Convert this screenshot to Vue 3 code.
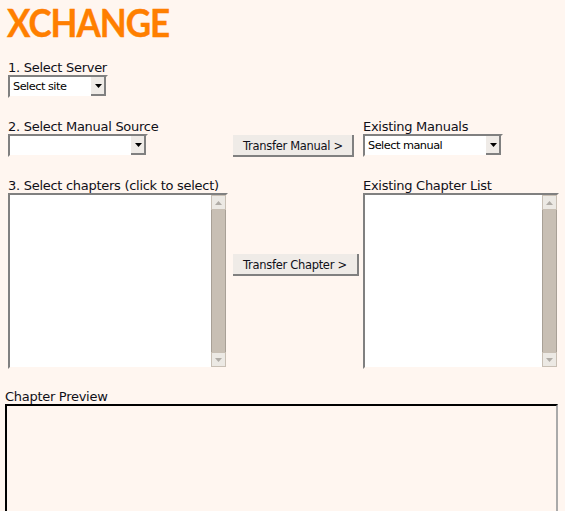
<script setup>
const arrow = 'M0 0H7L3.500 4Z'
</script>

<template>
  <main class="page">
    <h1 class="logo">XCHANGE</h1>

    <section class="row server">
      <div class="field">
        <label>1. Select Server</label>
        <div class="combo w100">
          <span class="value">Select site</span>
          <span class="drop"><svg width="7" height="4" viewBox="0 0 7 4"><path :d="arrow" /></svg></span>
        </div>
      </div>
    </section>

    <section class="row manual">
      <div class="col-left">
        <label>2. Select Manual Source</label>
        <div class="combo w140">
          <span class="value"></span>
          <span class="drop"><svg width="7" height="4" viewBox="0 0 7 4"><path :d="arrow" /></svg></span>
        </div>
      </div>
      <div class="col-mid">
        <button class="btn" type="button">Transfer Manual &gt;</button>
      </div>
      <div class="col-right">
        <label>Existing Manuals</label>
        <div class="combo w140">
          <span class="value">Select manual</span>
          <span class="drop"><svg width="7" height="4" viewBox="0 0 7 4"><path :d="arrow" /></svg></span>
        </div>
      </div>
    </section>

    <section class="row chapters">
      <div class="col-left">
        <label>3. Select chapters (click to select)</label>
        <div class="list">
          <div class="scroll">
            <span class="step"><svg width="7" height="4" viewBox="0 0 7 4"><path d="M0 4H7L3.500 0Z" /></svg></span>
            <span class="thumb"></span>
            <span class="step"><svg width="7" height="4" viewBox="0 0 7 4"><path :d="arrow" /></svg></span>
          </div>
        </div>
      </div>
      <div class="col-mid center">
        <button class="btn wide" type="button">Transfer Chapter &gt;</button>
      </div>
      <div class="col-right">
        <label>Existing Chapter List</label>
        <div class="list">
          <div class="scroll">
            <span class="step"><svg width="7" height="4" viewBox="0 0 7 4"><path d="M0 4H7L3.500 0Z" /></svg></span>
            <span class="thumb"></span>
            <span class="step"><svg width="7" height="4" viewBox="0 0 7 4"><path :d="arrow" /></svg></span>
          </div>
        </div>
      </div>
    </section>

    <section class="preview">
      <label>Chapter Preview</label>
      <div class="preview-box"></div>
    </section>
  </main>
</template>

<style>
html, body { margin: 0; background: #fff6f0; overflow: hidden; }
</style>

<style scoped>
.page {
  width: 565px;
  height: 511px;
  overflow: hidden;
  background: #fff6f0;
  font-family: "DejaVu Sans", sans-serif;
  font-size: 13px;
  letter-spacing: -0.28px;
  color: #101018;
  box-sizing: border-box;
}
.logo {
  margin: 0 0 0 7px;
  padding: 0;
  height: 58px;
  width: 190px;
  box-sizing: border-box;
  font-family: Lato, sans-serif;
  font-weight: 700;
  font-size: 38px;
  line-height: 45px;
  letter-spacing: -1.1px;
  -webkit-text-stroke: 0.4px #ff7f00;
  color: #ff7f00;
  transform: scaleX(0.92);
  transform-origin: left top;
}
label { display: block; height: 15px; line-height: 15px; white-space: nowrap; }
.row { display: flex; padding-left: 8px; }
.server { height: 61px; }
.server label { margin-top: 2px; }
.manual { height: 59px; }
.col-left { width: 219px; flex: none; }
.col-mid { width: 130px; margin-left: 6px; flex: none; padding-top: 16px; }
.col-right { width: 195px; flex: none; }
.chapters { height: 211px; }
.combo {
  display: flex;
  height: 23px;
  box-sizing: border-box;
  border-top: 2px solid #808080;
  border-left: 2px solid #808080;
  border-right: 2px solid transparent;
  border-bottom: 2px solid transparent;
  background: #fff;
  background-clip: padding-box;
}
.w100 { width: 100px; }
.w140 { width: 140px; }
.value { flex: 1; font-size: 11.3px; letter-spacing: -0.5px; line-height: 20px; padding-left: 3px; color: #000; }
.drop {
  width: 15px;
  flex: none;
  box-sizing: border-box;
  padding-left: 2px;
  background: #efebe7;
  border-right: 2px solid #808080;
  border-bottom: 2px solid #808080;
  display: flex;
  align-items: center;
  justify-content: center;
}
.drop path { fill: #000; }
.btn {
  display: block;
  width: 121px;
  height: 22px;
  box-sizing: border-box;
  padding: 1px 0 0 10px;
  text-align: left;
  border: 0;
  border-right: 2px solid #808080;
  border-bottom: 2px solid #808080;
  background: #efebe7;
  font: 11.5px "DejaVu Sans", sans-serif;
  letter-spacing: -0.3px;
  color: #101018;
  white-space: nowrap;
}
.wide { width: 126px; }
.center { padding-top: 76px; }
.list {
  height: 176px;
  display: flex;
  justify-content: flex-end;
  box-sizing: border-box;
  border-top: 2px solid #808080;
  border-left: 2px solid #808080;
  border-right: 2px solid transparent;
  border-bottom: 2px solid transparent;
  background: #fff;
  background-clip: padding-box;
}
.col-left .list { width: 220px; }
.col-right .list { width: 196px; }
.scroll { width: 15px; display: flex; flex-direction: column; }
.step {
  height: 15px;
  flex: none;
  box-sizing: border-box;
  background: #ece9e4;
  border: 1px solid #c8bfb4;
  display: flex;
  align-items: center;
  justify-content: center;
}
.step path { fill: #b0aca6; }
.thumb { flex: 1; background: #c8bfb4; border-left: 1px solid #a8a096; border-right: 1px solid #a8a096; }
.preview { padding-left: 5px; }
.preview-box {
  width: 553px;
  height: 200px;
  box-sizing: border-box;
  border-top: 2px solid #000;
  border-left: 2px solid #000;
  border-right: 2px solid #aaa;
}
</style>
